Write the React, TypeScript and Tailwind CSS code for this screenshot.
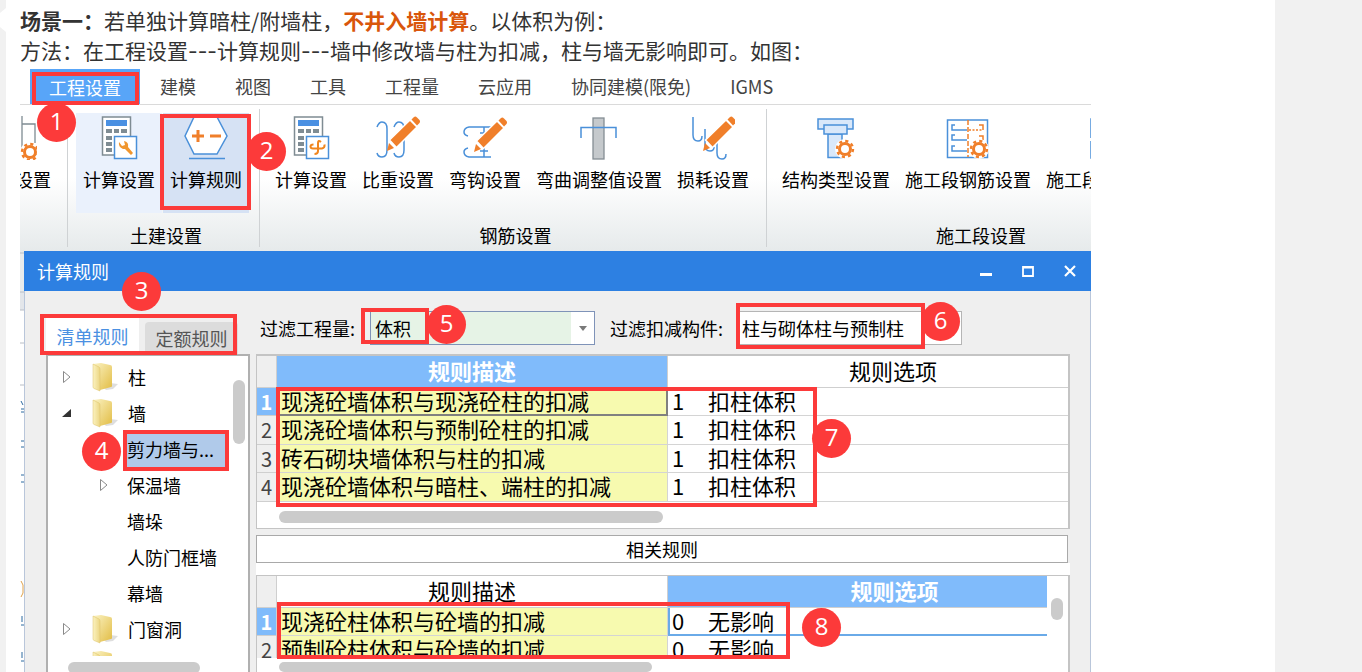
import { useState } from "react";
import type { ReactNode } from "react";
import clsx from "clsx";

const MENUS = ["建模", "视图", "工具", "工程量", "云应用", "协同建模(限免)", "IGMS"];

const BLUE = "#4a90d9";
const ORANGE = "#f07f2a";

function Icon({ children }: { children: ReactNode }) {
  return (
    <svg width="44" height="44" viewBox="0 0 44 44" fill="none" className="shrink-0">
      {children}
    </svg>
  );
}

function Pencil({ x, y }: { x: number; y: number }) {
  return (
    <g transform={`translate(${x} ${y})`} fill={ORANGE}>
      <path d="M1.500 -9 L22 -29 L29 -22 L8.500 -1.500 Z" stroke="#fff" strokeWidth="1.500" />
      <path d="M-1 2 L1 -6 L6 -1 Z" />
      <path d="M23.500 -29.500 L26 -32 Q27.500 -33 29 -31.500 L31.500 -29 Q32.500 -27.500 31.500 -26 L29 -23.500 Z" />
    </g>
  );
}

function Gear({ x, y }: { x: number; y: number }) {
  return (
    <g transform={`translate(${x} ${y})`}>
      <circle r="10" fill="#fff" />
      <circle r="5.500" stroke={ORANGE} strokeWidth="3" fill="#fff" />
      <circle r="8" stroke={ORANGE} strokeWidth="2.400" strokeDasharray="3.140 3.140" />
    </g>
  );
}

function Calculator() {
  return (
    <>
      <rect x="5.500" y="1" width="28" height="38" fill="#fff" stroke="#7f8c93" strokeWidth="1.500" />
      <rect x="9" y="4" width="21" height="6" fill="#4a90e2" />
      {[13, 20, 26, 32].map((y) => (
        <g key={y} fill="#7f8c93">
          <rect x="9" y={y} width="6" height="4" />
          <rect x="17" y={y} width="5" height="4" />
          <rect x="24" y={y} width="6" height="4" />
        </g>
      ))}
      <rect x="17.500" y="20.500" width="22" height="22" fill="#fff" stroke={BLUE} strokeWidth="1.500" />
    </>
  );
}

const icons: Record<string, ReactNode> = {
  floor: (
    <Icon>
      <path d="M29 0 V36 M29 8 H42 V27" stroke="#7f8c93" strokeWidth="1.300" />
      <Gear x={37} y={36} />
    </Icon>
  ),
  calc: (
    <Icon>
      <Calculator />
      <path d="M22 26 Q21 31 26 33 L28 33 L34 39 L36 37 L31 31 Q32 26 27 25 L28 29 L25 30 Z" fill="#f0962e" />
    </Icon>
  ),
  rule: (
    <Icon>
      <path d="M10 1 H33 L43 20 L33 38 H10 L1 20 Z" fill="#fff" stroke={BLUE} strokeWidth="1.500" />
      <path d="M5 42.500 H41" stroke={BLUE} strokeWidth="1.300" />
      <path d="M8 20 H20 M14 14 V26 M26 20 H37" stroke={ORANGE} strokeWidth="3" />
    </Icon>
  ),
  rebar: (
    <Icon>
      <Calculator />
      <path
        d="M32 26 Q29 23.500 29 27 V35 Q29 38 25.500 38 M24.500 28.500 Q21.500 28.500 21.500 30.500 Q21.500 32.500 24 32.500 H33 Q36 32 35.500 28.500"
        stroke="#f0861e"
        strokeWidth="2"
      />
    </Icon>
  ),
  weight: (
    <Icon>
      <path d="M1 11 Q3 6 6 6 Q11 6 11 13 V34 Q11 41 6 41 Q2 41 1 37 M18 11 Q20 6 23 6 Q28 6 28 13 V34 Q28 41 23 41 Q19 41 18 37" stroke={BLUE} strokeWidth="1.500" />
      <Pencil x={12} y={33} />
    </Icon>
  ),
  hook: (
    <Icon>
      <path d="M28 11 H6 Q1 12 1 16 Q1 19 5 20 M28 41 H6 Q1 40 1 36 Q1 33 5 32 M21 11 V41 M17 17 H25 M17 35 H25" stroke={BLUE} strokeWidth="1.500" />
      <Pencil x={12} y={34} />
    </Icon>
  ),
  bend: (
    <Icon>
      <rect x="16" y="2" width="11" height="41" fill="#c5c9cc" stroke="#858e94" strokeWidth="1.300" />
      <path d="M4 22 V11.500 H39 V22" stroke={BLUE} strokeWidth="1.500" />
    </Icon>
  ),
  loss: (
    <Icon>
      <path d="M2 1 V19 Q2 25 7 25 Q11 25 11 20 M14 13 V29 Q14 35 19 35 Q23 35 23 31 M26 22 V37 Q26 43 31 43 Q35 43 35 38" stroke={BLUE} strokeWidth="1.500" />
      <Pencil x={13} y={33} />
    </Icon>
  ),
  structure: (
    <Icon>
      <g fill="#d9e8fa" stroke={BLUE} strokeWidth="1.500">
        <path d="M14 18 H28 V41.500 H14 Z" />
        <rect x="4" y="3" width="35" height="10" />
        <rect x="10" y="9" width="23" height="9" />
      </g>
      <Gear x={31} y={33} />
    </Icon>
  ),
  section: (
    <Icon>
      <rect x="1.500" y="4" width="40" height="37.500" fill="#fff" stroke={BLUE} strokeWidth="1.500" />
      <path d="M9 9 H6 V14 H21 M9 19 H6 V24 H21 M9 30 H6 V35 H21" stroke={BLUE} strokeWidth="1.500" />
      <path d="M22 4 V41" stroke={ORANGE} strokeWidth="1.500" strokeDasharray="5 2" />
      <path d="M33 9 H37 V14 M33 20 H37 V24" stroke={ORANGE} strokeWidth="1.500" />
      <path d="M23 14 H37" stroke={ORANGE} strokeWidth="1.500" strokeDasharray="2 1.500" />
      <Gear x={33} y={33} />
    </Icon>
  ),
  order: (
    <Icon>
      <path d="M4 22 V3 H40 V22 M4 25 V42 H40 V25" stroke={BLUE} strokeWidth="1.500" />
    </Icon>
  ),
};

type Tool = { icon: string; label: string; className?: string };

const GROUPS: { name: string; className: string; tools: Tool[] }[] = [
  {
    name: "",
    className: "w-12 items-end pr-[10px]",
    tools: [{ icon: "floor", label: "楼层设置" }],
  },
  {
    name: "土建设置",
    className: "w-48 pl-2",
    tools: [
      { icon: "calc", label: "计算设置", className: "bg-[#eaf1fc]" },
      { icon: "rule", label: "计算规则", className: "bg-[#d6e2f4]" },
    ],
  },
  {
    name: "钢筋设置",
    className: "w-[507px] pl-2",
    tools: [
      { icon: "rebar", label: "计算设置" },
      { icon: "weight", label: "比重设置" },
      { icon: "hook", label: "弯钩设置" },
      { icon: "bend", label: "弯曲调整值设置" },
      { icon: "loss", label: "损耗设置" },
    ],
  },
  {
    name: "施工段设置",
    className: "w-[424px] pl-2",
    tools: [
      { icon: "structure", label: "结构类型设置" },
      { icon: "section", label: "施工段钢筋设置" },
      { icon: "order", label: "施工段顺序设置" },
    ],
  },
];

function Ribbon() {
  return (
    <div className="flex h-[146px] overflow-hidden bg-linear-to-b from-white from-50% to-[#e6eaeb] pt-2">
      {GROUPS.map((group, i) => (
        <div key={i} className="flex shrink-0">
          {i > 0 && <div className="-mt-1 mb-1 w-px bg-[#cfd2d4]" />}
          <div className={clsx("-mr-px flex shrink-0 flex-col", group.className)}>
            <div className="flex gap-px">
              {group.tools.map((tool) => (
                <button
                  key={tool.label}
                  className={clsx(
                    "flex h-[100px] shrink-0 flex-col items-center gap-[9px] px-[7px] pt-[3px] whitespace-nowrap",
                    tool.className,
                  )}
                >
                  {icons[tool.icon]}
                  <span className="text-lg leading-5 text-black">{tool.label}</span>
                </button>
              ))}
            </div>
            <div className="mt-3 pr-1 text-center text-lg leading-5 text-black">{group.name}</div>
          </div>
        </div>
      ))}
    </div>
  );
}

function FolderIcon() {
  return (
    <svg width="26" height="30" viewBox="0 0 26 30" className="shrink-0">
      <defs>
        <linearGradient id="folder-back" x1="0" x2="1" y1="0" y2="1">
          <stop offset="0" stopColor="#fbf3c4" />
          <stop offset="1" stopColor="#e2bd45" />
        </linearGradient>
        <linearGradient id="folder-front" x1="0" x2="1">
          <stop offset="0" stopColor="#fbf2c0" />
          <stop offset="1" stopColor="#ecd683" />
        </linearGradient>
      </defs>
      <path d="M18 21 L26 22 L21 27 L14 28 L12 26 Z" fill="#b5b5b5" opacity="0.450" />
      <path d="M1 2 L9 1 L18 3 Q20 3 20 5 V24 Q20 25 19 25 L8 28 Z" fill="url(#folder-back)" />
      <path d="M1 2 L7 5 Q8 5.500 8 7 V29 L2 26.500 Q1 26 1 25 Z" fill="url(#folder-front)" stroke="#dcc268" strokeWidth="0.500" />
    </svg>
  );
}

function Arrow({ open }: { open?: boolean }) {
  return (
    <svg width="10" height="14" viewBox="0 0 10 14" className="shrink-0">
      {open ? (
        <path d="M0 11 L9 3 V11 Z" fill="#333" />
      ) : (
        <path d="M1.500 1.500 V12.500 L8 7 Z" fill="#fff" stroke="#8a8a8a" />
      )}
    </svg>
  );
}

const TREE = [
  { label: "柱", folder: true, arrow: true },
  { label: "墙", folder: true, arrow: true, open: true },
  { label: "剪力墙与...", selected: true },
  { label: "保温墙", arrow: true },
  { label: "墙垛" },
  { label: "人防门框墙" },
  { label: "幕墙" },
  { label: "门窗洞", folder: true, arrow: true },
  { label: "梁", folder: true, arrow: true },
];

function RuleTree() {
  return (
    <div className="relative flex w-[204px] shrink-0 flex-col border-x-2 border-t-2 border-[#b0b0b0] bg-white">
      <ul className="h-[300px] overflow-hidden pt-[3px]">
        {TREE.map((node) => (
          <li
            key={node.label}
            className={clsx("flex h-9 items-center gap-5", node.folder ? "pl-[14px]" : "pl-[51px]")}
          >
            {node.arrow ? <Arrow open={node.open} /> : <span className="w-[10px]" />}
            {node.folder && <FolderIcon />}
            <span
              className={clsx(
                "text-lg whitespace-nowrap text-black",
                node.folder ? "-ml-[10px]" : "-ml-[2px]",
                node.selected && "w-[100px] bg-[#b0caea] leading-9",
              )}
            >
              {node.label}
            </span>
          </li>
        ))}
      </ul>
      <div className="absolute top-6 right-[3px] h-16 w-3 rounded-full bg-[#cbcbcb]" />
      <div className="mt-[6px] ml-5 h-3 w-[132px] rounded-full bg-[#cbcbcb]" />
    </div>
  );
}

type Rule = { desc: string; code: string; option: string };

const WALL_RULES: Rule[] = [
  { desc: "现浇砼墙体积与现浇砼柱的扣减", code: "1", option: "扣柱体积" },
  { desc: "现浇砼墙体积与预制砼柱的扣减", code: "1", option: "扣柱体积" },
  { desc: "砖石砌块墙体积与柱的扣减", code: "1", option: "扣柱体积" },
  { desc: "现浇砼墙体积与暗柱、端柱的扣减", code: "1", option: "扣柱体积" },
];

const RELATED_RULES: Rule[] = [
  { desc: "现浇砼柱体积与砼墙的扣减", code: "0", option: "无影响" },
  { desc: "预制砼柱体积与砼墙的扣减", code: "0", option: "无影响" },
];

function RuleTable({ rules, active }: { rules: Rule[]; active: "desc" | "option" }) {
  const activeHead = "bg-[#80bbfb] font-bold text-white";
  return (
    <table className="w-full table-fixed border-separate border-spacing-0 text-[22px] leading-6 text-black">
      <colgroup>
        <col className="w-5" />
        <col className="w-[391px]" />
        <col />
      </colgroup>
      <thead className="leading-7">
        <tr className="h-8">
          <th className="border-r border-b border-[#cfcfcf] bg-[#efefef]" />
          <th
            className={clsx(
              "border-r border-b border-[#cfcfcf] p-0 align-top",
              active === "desc" ? activeHead : "font-normal",
            )}
          >
            规则描述
          </th>
          <th
            className={clsx(
              "border-b border-[#cfcfcf] p-0 align-top",
              active === "option" ? ["pl-[74px]", activeHead] : "pl-[50px] font-normal",
            )}
          >
            规则选项
          </th>
        </tr>
      </thead>
      <tbody>
        {rules.map((rule, i) => (
          <tr key={rule.desc} className="h-7 even:h-[29px]">
            <th
              className={clsx(
                "border-r border-b border-[#cfcfcf] p-0 text-xl leading-6",
                i === 0 ? "bg-[#80bbfb] font-bold text-white" : "bg-[#efefef] font-normal text-[#444]",
              )}
            >
              {i + 1}
            </th>
            <td
              className={clsx(
                "bg-[#f7faaf] p-0 pl-1 align-top whitespace-nowrap",
                i === 0 && active === "desc"
                  ? "border-r-2 border-b-2 border-[#808080]"
                  : "border-r border-b border-[#d4d4d4]",
              )}
            >
              {rule.desc}
            </td>
            <td
              className={clsx(
                "p-0 align-top",
                i === 0 && active === "option"
                  ? "border-b-2 border-l-2 border-[#6aaae8] pl-[2px]"
                  : "border-b border-[#d4d4d4] pl-1",
              )}
            >
              <span className="inline-block w-9">{rule.code}</span>
              {rule.option}
            </td>
          </tr>
        ))}
      </tbody>
    </table>
  );
}

function Filters() {
  const [component, setComponent] = useState("柱与砌体柱与预制柱");
  return (
    <div className="flex items-center pt-[11px] text-lg text-black">
      <label htmlFor="quantity" className="w-[110px] whitespace-nowrap">
        过滤工程量:
      </label>
      <div className="relative">
        <select
          id="quantity"
          className="block h-[34px] w-[225px] appearance-none border border-[#7f93b8] bg-[#e6f3e6] pl-1"
        >
          <option>体积</option>
          <option>面积</option>
        </select>
        <span className="pointer-events-none absolute top-px right-px flex h-8 w-[23px] items-center justify-center bg-white">
          <svg width="8" height="5" viewBox="0 0 8 5">
            <path d="M0 0 H8 L4 5 Z" fill="#7a7a7a" />
          </svg>
        </span>
      </div>
      <label htmlFor="component" className="ml-[15px] w-[129px] whitespace-nowrap">
        过滤扣减构件:
      </label>
      <input
        id="component"
        type="text"
        value={component}
        onChange={(e) => setComponent(e.target.value)}
        className="h-[34px] w-[223px] border border-[#b5b5b5] bg-white pl-[2px]"
      />
    </div>
  );
}

function RuleDialog() {
  return (
    <section className="flex min-w-0 flex-1 flex-col">
      <header className="flex h-10 items-center bg-[#2d80e2] pr-[14px] pl-[13px] text-white">
        <h2 className="text-lg">计算规则</h2>
        <div className="ml-auto flex gap-[28px]">
          <button aria-label="最小化">
            <svg width="14" height="14" viewBox="0 0 14 14">
              <path d="M1 10.500 H13" stroke="#fff" strokeWidth="3" />
            </svg>
          </button>
          <button aria-label="最大化">
            <svg width="14" height="14" viewBox="0 0 14 14" fill="none">
              <path d="M2 3 H12 V12 H2 Z M2 3.500 H12" stroke="#fff" strokeWidth="1.800" />
            </svg>
          </button>
          <button aria-label="关闭">
            <svg width="14" height="14" viewBox="0 0 14 14">
              <path d="M2 2 L12 12 M12 2 L2 12" stroke="#fff" strokeWidth="2.200" />
            </svg>
          </button>
        </div>
      </header>

      <div className="flex flex-1 flex-col border-x border-[#b9c6da] bg-[#efefef] pr-5 pl-[21px]">
        <div className="flex h-[63px]">
          <div className="flex w-[214px] shrink-0 items-end gap-[6px] text-lg">
            <button className="h-9 w-[93px] bg-white text-[#4a90e2]">清单规则</button>
            <button className="h-8 w-[93px] rounded-t bg-[#dcdcdc] text-[#555]">定额规则</button>
          </div>
          <Filters />
        </div>

        <div className="flex flex-1 gap-[6px]">
          <RuleTree />
          <div className="min-w-0 flex-1">
            <div className="h-[175px] border border-t-2 border-r-2 border-[#c4c4c4] bg-white">
              <RuleTable rules={WALL_RULES} active="desc" />
              <div className="mt-[9px] ml-[22px] h-3 w-96 rounded-full bg-[#cbcbcb]" />
            </div>
            <div className="pt-[6px] pr-[2px]">
              <button className="block h-7 w-full border border-[#a9a9a9] bg-white text-lg leading-6 text-black">
                相关规则
              </button>
            </div>
            <div className="bg-white pt-3">
              <div className="border border-r-2 border-b-0 border-[#c4c4c4]">
                <div className="flex h-[82px] overflow-hidden">
                  <div className="min-w-0 flex-1">
                    <RuleTable rules={RELATED_RULES} active="option" />
                  </div>
                  <div className="w-[21px] shrink-0 bg-white pt-[22px] pl-1">
                    <div className="h-[22px] w-3 rounded-full bg-[#cbcbcb]" />
                  </div>
                </div>
                <div className="mt-1 ml-[22px] h-[10px] w-[373px] rounded-full bg-[#cbcbcb]" />
              </div>
            </div>
          </div>
        </div>
      </div>
    </section>
  );
}

// slice of the main window that stays visible to the left of the dialog
function WindowEdge() {
  return (
    <svg width="4" height="421" viewBox="0 0 4 421" className="shrink-0">
      <rect width="4" height="41" fill="#e9ecec" />
      <rect y="41" width="4" height="18" fill="#e3e6ea" />
      <path d="M0 2 H4 M0 41 H4 M0 59 H4 M0 92 H4 M0 134 H4" stroke="#b9bec6" />
      <path d="M1 150 L3 154 M1 158 H4 M1 161 H4 M1 190 H4 M1 196 H4 M1 224 H4 M1 231 H4 M2 365 V371 M1 374 H4 M2 401 V407 M1 410 H4" stroke="#2d6aa0" />
      <path d="M1 330 L3 334 V342 L1 346" stroke="#e0a24a" fill="none" />
    </svg>
  );
}

const FRAMES = [
  "left-3 top-[5px] h-[33px] w-[107px]",
  "left-[140px] top-[47px] h-[96px] w-[91px]",
  "left-5 top-[247px] h-[41px] w-[197px]",
  "left-[103px] top-[363px] h-[41px] w-[106px]",
  "left-[341px] top-[241px] h-9 w-[68px]",
  "left-[716px] top-[236px] h-[46px] w-[189px]",
  "left-64 top-[320px] h-[120px] w-[541px]",
  "left-[257px] top-[535px] h-[57px] w-[513px]",
];

const BADGES = [
  "left-[17px] top-9",
  "left-[227px] top-[65px]",
  "left-[102px] top-[205px]",
  "left-[62px] top-[365px]",
  "left-[407px] top-[238px]",
  "left-[901px] top-[235px]",
  "left-[792px] top-[352px]",
  "left-[782px] top-[541px]",
];

function Annotations() {
  return (
    <div className="pointer-events-none">
      {FRAMES.map((pos) => (
        <div key={pos} className={clsx("absolute border-4 border-[#fc3a3a]", pos)} />
      ))}
      {BADGES.map((pos, i) => (
        <span
          key={pos}
          className={clsx(
            "absolute size-[39px] rounded-full bg-[#fc3a3a] text-center font-['Open_Sans','Noto_Sans',sans-serif] text-2xl leading-9 text-white",
            pos,
          )}
        >
          {i + 1}
        </span>
      ))}
    </div>
  );
}

function Dashes() {
  return <span className="font-['Inter',sans-serif] leading-none">---</span>;
}

export default function App() {
  return (
    <div className="flex min-h-screen bg-[#f1f1f1] font-['Noto_Sans_CJK_SC',sans-serif]">
      <svg width="6" height="32" viewBox="0 0 6 32" className="shrink-0">
        <path d="M6 8 L0 13 V27 L6 32 Z" fill="#fff" />
      </svg>
      <main className="mr-[87px] min-w-0 flex-1 bg-white pr-[184px] pl-[14px]">
        <div className="pt-[5px] text-[21px] leading-[30px] text-[#333]">
          <p>
            <strong>场景一：</strong>若单独计算暗柱/附墙柱，
            <strong className="text-[#d9560b]">不井入墙计算</strong>。以体积为例：
          </p>
          <p>
            方法：在工程设置
            <Dashes />
            计算规则
            <Dashes />
            墙中修改墙与柱为扣减，柱与墙无影响即可。如图：
          </p>
        </div>

        <figure className="relative mt-[2px]">
          <nav className="flex h-[38px] items-center gap-[39px] border-b border-[#dadada] pl-[10px] text-lg whitespace-nowrap text-[#444]">
            <button className="-mr-[19px] h-[35px] w-[110px] self-end bg-[#58a5f8] text-white">工程设置</button>
            {MENUS.map((menu) => (
              <button key={menu}>{menu}</button>
            ))}
          </nav>
          <Ribbon />
          <div className="flex">
            <WindowEdge />
            <RuleDialog />
          </div>
          <Annotations />
        </figure>
      </main>
    </div>
  );
}
